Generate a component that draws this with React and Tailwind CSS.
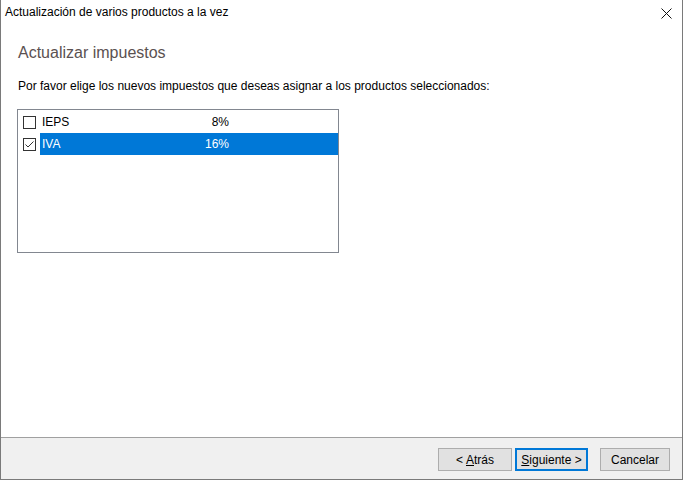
import React from 'react'

const font = { fontFamily: '"Liberation Sans", Arial, sans-serif' }

const taxes = [
  { id: 1, name: 'IEPS', rate: '8%', checked: false, selected: false },
  { id: 2, name: 'IVA', rate: '16%', checked: true, selected: true },
]

const CheckBox = ({ checked }) => (
  <div className="w-[13px] h-[13px] border border-[#333333] bg-white flex items-center justify-center shrink-0">
    {checked && (
      <svg width="11" height="11" viewBox="0 0 11 11">
        <polyline points="1.5,5.5 4,8 9.5,2.5" fill="none" stroke="#333333" strokeWidth="1" />
      </svg>
    )}
  </div>
)

const Button = ({ children, width, isDefault }) => (
  <button
    className={`h-[23px] ${width} text-[12px] text-black bg-[#e1e1e1] flex items-center justify-center ${
      isDefault ? 'border-2 border-[#0078d7]' : 'border border-[#adadad]'
    }`}
  >
    {children}
  </button>
)

export default function App() {
  return (
    <div
      className="w-[683px] h-[480px] bg-white border-l border-r border-b border-[#7a7a7a] flex flex-col text-black"
      style={font}
    >
      {/* Barra de título */}
      <div className="h-[30px] flex items-start justify-between shrink-0">
        <span className="pl-[4px] pt-[4px] text-[12px] leading-[16px]">
          Actualización de varios productos a la vez
        </span>
        <div className="w-[30px] h-[26px] flex items-center justify-center mr-[1px]">
          <svg width="11" height="11" viewBox="0 0 11 11">
            <line x1="0.5" y1="0.5" x2="10.5" y2="10.5" stroke="#111" strokeWidth="1" />
            <line x1="10.5" y1="0.5" x2="0.5" y2="10.5" stroke="#111" strokeWidth="1" />
          </svg>
        </div>
      </div>

      {/* Contenido */}
      <div className="flex-1 pl-[17px]">
        <h1 className="mt-[12px] text-[16px] leading-[22px] text-[#5b5151]">Actualizar impuestos</h1>
        <p className="mt-[14px] text-[12px] leading-[16px]">
          Por favor elige los nuevos impuestos que deseas asignar a los productos seleccionados:
        </p>

        <div className="mt-[15px] -ml-px w-[322px] h-[144px] border border-[#828790] pt-[1px]">
          {taxes.map(tax => (
            <div key={tax.id} className="h-[22px] flex items-center">
              <div className="pl-[5px] pr-[4px]">
                <CheckBox checked={tax.checked} />
              </div>
              <div
                className={`flex-1 h-full flex items-center pl-[2px] text-[12px] ${
                  tax.selected ? 'bg-[#0078d7] text-white' : ''
                }`}
              >
                <span className="w-[150px]">{tax.name}</span>
                <span className="w-[37px] text-right">{tax.rate}</span>
              </div>
            </div>
          ))}
        </div>
      </div>

      {/* Pie con botones */}
      <div className="h-[42px] shrink-0 border-t border-[#a0a0a0] bg-[#f0f0f0] flex justify-end items-start pt-[10px] pr-[12px]">
        <Button width="w-[74px]">
          &lt; <span className="underline ml-[3px]">A</span>trás
        </Button>
        <div className="ml-[3px]">
          <Button width="w-[73px]" isDefault>
            <span className="underline">S</span>iguiente &gt;
          </Button>
        </div>
        <div className="ml-[12px]">
          <Button width="w-[70px]">Cancelar</Button>
        </div>
      </div>
    </div>
  )
}
